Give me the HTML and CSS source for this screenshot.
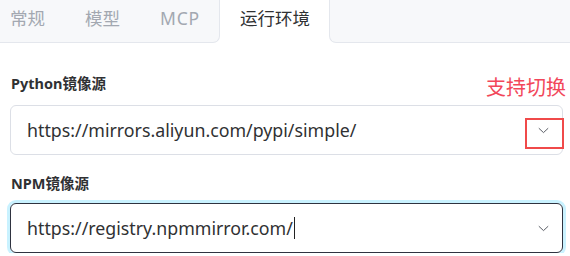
FILE: index.html
```html
<!DOCTYPE html>
<html lang="zh-CN">
<head>
<meta charset="utf-8">
<title>设置</title>
<link rel="stylesheet" href="styles.css">
</head>
<body>
<div class="tabs">
  <div class="tab-group left">
    <div class="tab first">常规</div>
    <div class="tab">模型</div>
    <div class="tab mcp">MCP</div>
  </div>
  <div class="tab active">运行环境</div>
  <div class="tab-group right"></div>
</div>
<div class="content">
  <div class="field">
    <div class="label">Python镜像源</div>
    <div class="select">
      <span class="value">https://mirrors.aliyun.com/pypi/simple/</span>
      <svg class="chevron" width="11" height="7" viewBox="0 0 11 7"><path d="M0.8 1.2 L5.5 5.6 L10.2 1.2" fill="none" stroke="#5a5e66" stroke-width="1"/></svg>
      <div class="highlight"></div>
    </div>
    <div class="note">支持切换</div>
  </div>
  <div class="field second">
    <div class="label">NPM镜像源</div>
    <div class="select focused">
      <span class="value">https://registry.npmmirror.com/</span><span class="caret"></span>
      <svg class="chevron" width="11" height="7" viewBox="0 0 11 7"><path d="M0.8 1.2 L5.5 5.6 L10.2 1.2" fill="none" stroke="#5a5e66" stroke-width="1"/></svg>
    </div>
  </div>
</div>
</body>
</html>
```
FILE: styles.css
```css
html, body {
  margin: 0;
  padding: 0;
  background: #ffffff;
  font-family: "Noto Sans", "Noto Sans CJK SC", sans-serif;
  color: #303133;
}
.tabs {
  display: flex;
  height: 43px;
}
.tab-group {
  display: flex;
  background: #f7f8fa;
  border-bottom: 1px solid #e4e7ed;
  box-sizing: border-box;
  height: 43px;
}
.tab-group.left {
  border-right: 1px solid #e4e7ed;
  border-bottom-right-radius: 7px;
}
.tab-group.right {
  flex: 1;
  border-left: 1px solid #e4e7ed;
  border-bottom-left-radius: 7px;
}
.tab {
  padding: 0 20px;
  font-size: 17.5px;
  line-height: 37px;
  color: #a3a8b1;
  white-space: nowrap;
}
.tab.first {
  padding-left: 10px;
}
.tab.mcp {
  letter-spacing: 0.8px;
  padding-right: 19px;
}
.tab.active {
  color: #303133;
  background: #ffffff;
  padding: 0 19px 0 20px;
}
.content {
  padding: 30px 7px 0 10px;
}
.field {
  position: relative;
}
.field.second {
  margin-top: 18px;
}
.label {
  font-size: 14.5px;
  font-weight: 700;
  line-height: 20px;
  padding-left: 1px;
  margin-bottom: 12px;
  color: #303133;
}
.field.second .label {
  margin-bottom: 10px;
}
.select {
  position: relative;
  display: flex;
  align-items: center;
  height: 50px;
  box-sizing: border-box;
  border: 1px solid #dcdfe6;
  border-radius: 6px;
  padding: 0 13px 0 16px;
  font-size: 17.8px;
  color: #303133;
}
.select.focused {
  border-color: #2f3340;
  box-shadow: 0 0 0 3px #c9f2ff;
}
.value {
  white-space: nowrap;
}
.caret {
  display: inline-block;
  width: 1px;
  height: 22px;
  background: #222;
  margin-left: 1px;
}
.chevron {
  margin-left: auto;
}
.highlight {
  position: absolute;
  left: 514px;
  top: 12px;
  width: 35px;
  height: 27px;
  border: 2px solid #f04a4a;
}
.note {
  position: absolute;
  right: -3px;
  top: 3px;
  font-size: 20px;
  line-height: 24px;
  color: #f2475a;
}
```
